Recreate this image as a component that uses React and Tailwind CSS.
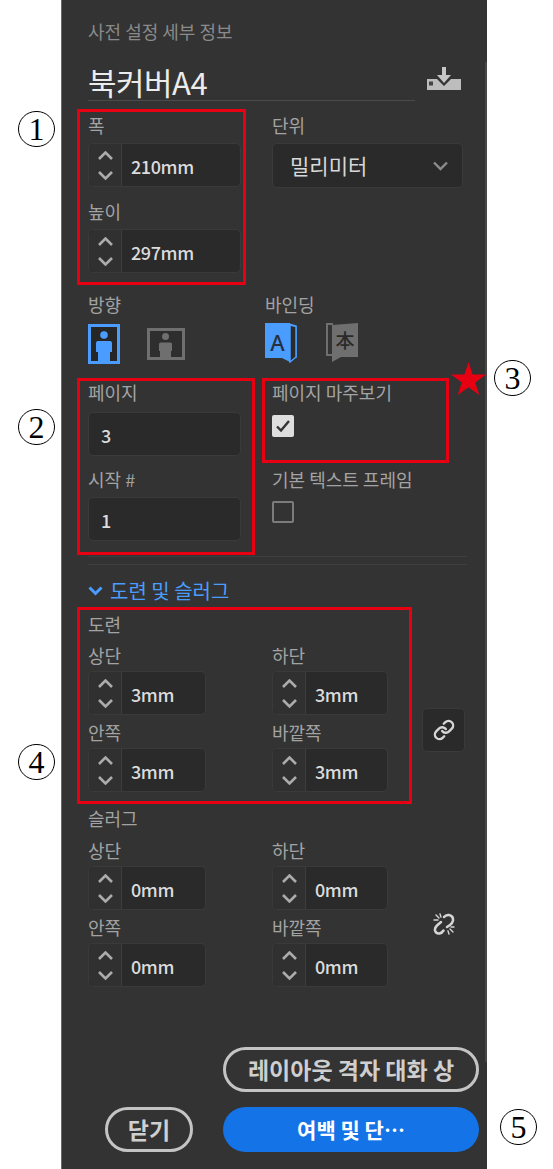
import React from 'react';
import { Link } from 'lucide-react';

const Label = ({ children, className = '' }) => (
    <div className={`h-5 pb-[2px] flex items-center text-[18px] leading-5 text-[#a3a3a3] whitespace-nowrap ${className}`}>{children}</div>
);

const Arrow = ({ down }) => (
    <svg width="15" height="9" viewBox="0 0 15 9" fill="none" stroke="#ababab" strokeWidth="2.6">
        <polyline points={down ? '1,1 7.5,7.5 14,1' : '1,8 7.5,1.5 14,8'} />
    </svg>
);

const Spinner = ({ value, className = '' }) => (
    <div className={`flex h-11 rounded-[5px] border border-[#3a3a3a] bg-[#2a2a2a] ${className}`}>
        <div className="w-[33px] shrink-0 flex flex-col items-center justify-center gap-[11px] border-r border-[#3d3d3d] bg-[#303030] rounded-l-[5px]">
            <Arrow />
            <Arrow down />
        </div>
        <div className="pl-[9px] pt-[2px] flex items-center text-[18px] font-medium tracking-[-0.4px] text-[#dcdcdc]">{value}</div>
    </div>
);

const TextInput = ({ value }) => (
    <div className="h-11 rounded-[5px] border border-[#3a3a3a] bg-[#2a2a2a] pl-3 pt-[2px] flex items-center text-[18px] font-medium text-[#dcdcdc]">{value}</div>
);

const Field = ({ label, value, className = '', gap = 'mt-[5px]' }) => (
    <div className={className}>
        <Label>{label}</Label>
        <Spinner value={value} className={gap} />
    </div>
);

const MarginGrid = ({ values }) => (
    <div className="grid grid-cols-[118px_116px] gap-x-[66px] gap-y-[8px] w-[300px]">
        <Field label="상단" value={values} />
        <Field label="하단" value={values} />
        <Field label="안쪽" value={values} />
        <Field label="바깥쪽" value={values} />
    </div>
);

const DownloadIcon = () => (
    <svg width="34" height="23" viewBox="0 0 34 23" className="mb-[11px]">
        <path d="M0 12h10l7 7 7-7h10v11H0z" fill="#bdbdbd" />
        <path d="M15 0h4v8h5l-7 8-7-8h5z" fill="#c6c6c6" />
        <rect x="2" y="14.500" width="4" height="4" fill="#444444" />
    </svg>
);

const UnlinkIcon = () => (
    <svg width="22" height="22" viewBox="0 0 22 22" fill="none" stroke="#d6d6d6" strokeLinecap="round">
        <g strokeWidth="2.500">
            <path d="M11 4Q13 1.500 16 2Q20.500 3 20 7.500Q19.500 10 17 12L14 14" />
            <path d="M8 9L4 12.500Q1.500 15 2 17.500Q3 21 6.500 20.500Q9 20 10.500 17.500" />
        </g>
        <g strokeWidth="1.400">
            <path d="M3 2l3 3M1 7h4M7 1l1 3" />
            <path d="M17 16l3 3M15 18l1 3M18 14h3" />
        </g>
    </svg>
);

const PortraitIcon = () => (
    <svg width="32" height="40" viewBox="0 0 32 40">
        <rect x="1.500" y="1.500" width="29" height="37" fill="#262626" stroke="#4a9dff" strokeWidth="3" />
        <circle cx="16" cy="11" r="3.800" fill="#4a9dff" />
        <path d="M8 19q0-2 2-2h12q2 0 2 2v9h-2v9H10v-9H8z" fill="#4a9dff" />
    </svg>
);

const LandscapeIcon = () => (
    <svg width="38" height="32" viewBox="0 0 38 32">
        <rect x="1.500" y="1.500" width="35" height="29" fill="#2e2e2e" stroke="#6f6f6f" strokeWidth="3" />
        <circle cx="18.500" cy="8.500" r="3.500" fill="#6f6f6f" />
        <path d="M12 16q0-1.500 1.500-1.500h10q1.500 0 1.500 1.500v7h-1v7H13v-7h-1z" fill="#6f6f6f" />
    </svg>
);

const BindLeftIcon = () => (
    <svg width="32" height="40" viewBox="0 0 32 40">
        <path d="M1 1h23l7 2v31h-2" fill="none" stroke="#4a9dff" strokeWidth="1.500" />
        <path d="M0 0h25v39l-8-4H0z" fill="#4a9dff" />
        <path d="M25 2l6 1.500V34l-6 5z" fill="#2b2b2b" stroke="#4a9dff" strokeWidth="1.500" />
        <text x="12.500" y="28" textAnchor="middle" fontSize="22" fontWeight="500" fill="#26303c" fontFamily="Noto Sans">A</text>
    </svg>
);

const BindRightIcon = () => (
    <svg width="32" height="40" viewBox="0 0 32 40">
        <path d="M7 1H1v31h5" fill="none" stroke="#6f6f6f" strokeWidth="2" />
        <path d="M6 2l26-2v34H15l-9 5z" fill="#6f6f6f" />
        <text x="19" y="25" textAnchor="middle" fontSize="19" fill="#2a2a2a" fontWeight="500" fontFamily="Noto Sans CJK KR">本</text>
    </svg>
);

const Num = ({ n, className }) => (
    <div className={`absolute w-[37px] h-[36px] rounded-full border-[1.5px] border-black bg-white flex items-center justify-center font-['Liberation_Serif',serif] text-[32px] leading-none text-black ${className}`}>{n}</div>
);

const App = () => {
    return (
        <div className="relative w-[553px] h-[1169px] bg-white overflow-hidden font-['Noto_Sans_CJK_KR','Noto_Sans',sans-serif]">
            <div className="relative ml-[61px] w-[426px] h-[1169px] bg-[#333333] border-l border-[#6a6a6a] pl-[26px] pt-[22px]">
                <div className="absolute right-0 top-[62px] w-[2px] h-[1000px] bg-[#484848]" />
                <div className="h-5 pb-[2px] flex items-center text-[18px] text-[#8a8a8a] whitespace-nowrap">사전 설정 세부 정보</div>

                <div className="mt-5 flex items-end">
                    <div className="w-[327px] h-[39px] border-b border-[#4a4a4a] flex items-center text-[31px] leading-none text-[#ececec] tracking-[-0.5px]">북커버A4</div>
                    <div className="ml-[12px]"><DownloadIcon /></div>
                </div>

                <div className="mt-[15px] grid grid-cols-[153px_191px] gap-x-[31px]">
                    <div>
                        <Field label="폭" value="210mm" gap="mt-[7px]" />
                        <Field label="높이" value="297mm" gap="mt-[7px]" className="mt-[15px]" />
                    </div>
                    <div>
                        <Label>단위</Label>
                        <div className="mt-[7px] h-[45px] rounded-[5px] border border-[#3a3a3a] bg-[#2a2a2a] pl-[17px] pr-[14px] flex items-center justify-between text-[21px] text-[#d8d8d8]">
                            밀리미터
                            <svg width="15" height="10" viewBox="0 0 15 10" fill="none" stroke="#8c8c8c" strokeWidth="2.400">
                                <polyline points="1,1.500 7.500,8 14,1.500" />
                            </svg>
                        </div>
                    </div>
                </div>

                <div className="mt-[22px] flex">
                    <div className="w-[177px]">
                        <Label>방향</Label>
                        <div className="mt-[9px] h-10 flex items-center gap-[27px]">
                            <PortraitIcon />
                            <LandscapeIcon />
                        </div>
                    </div>
                    <div>
                        <Label>바인딩</Label>
                        <div className="mt-[8px] h-10 flex items-center gap-[29px]">
                            <BindLeftIcon />
                            <BindRightIcon />
                        </div>
                    </div>
                </div>

                <div className="mt-[19px] grid grid-cols-[153px_191px] gap-x-[31px]">
                    <div>
                        <Label>페이지</Label>
                        <div className="mt-[9px]"><TextInput value="3" /></div>
                        <Label className="mt-[14px]">시작 #</Label>
                        <div className="mt-[7px]"><TextInput value="1" /></div>
                    </div>
                    <div>
                        <Label>페이지 마주보기</Label>
                        <div className="mt-[12px] w-[22px] h-[22px] rounded-[2px] bg-[#dedede] flex items-center justify-center">
                            <svg width="16" height="14" viewBox="0 0 16 14" fill="none" stroke="#333333" strokeWidth="2.400">
                                <polyline points="2,7.500 6,11.500 14,2" />
                            </svg>
                        </div>
                        <Label className="mt-[33px]">기본 텍스트 프레임</Label>
                        <div className="mt-[11px] w-[22px] h-[22px] rounded-[2px] border-2 border-[#7c7c7c]" />
                    </div>
                </div>

                <div className="mt-[15px] w-[379px] h-[9px] border-y border-[#3e3e3e]" />

                <div className="mt-[17px] h-5 pb-[2px] flex items-center gap-[7px] text-[20px] text-[#4a9dff]">
                    <svg width="15" height="10" viewBox="0 0 15 10" fill="none" stroke="#4a9dff" strokeWidth="3">
                        <polyline points="1.500,1.500 7.500,7.500 13.500,1.500" />
                    </svg>
                    도련 및 슬러그
                </div>

                <Label className="mt-[13px]">도련</Label>
                <div className="mt-[11px] flex">
                    <MarginGrid values="3mm" />
                    <div className="ml-[34px] mt-[62px] w-[43px] h-[44px] rounded-[5px] border border-[#3a3a3a] bg-[#2a2a2a] flex items-center justify-center">
                        <Link size={22} strokeWidth={2.600} color="#d6d6d6" />
                    </div>
                </div>

                <Label className="mt-[17px]">슬러그</Label>
                <div className="mt-[12px] flex">
                    <MarginGrid values="0mm" />
                    <div className="ml-[45px] mt-[72px]">
                        <UnlinkIcon />
                    </div>
                </div>

                <div className="mt-[60px] ml-[135px] w-[256px] h-[45px] rounded-full border-[3px] border-[#c4c4c4] flex items-center justify-center text-[23px] font-bold text-[#cfcfcf] whitespace-nowrap">
                    레이아웃 격자 대화 상
                </div>
                <div className="mt-[15px] ml-[17px] flex gap-[30px]">
                    <div className="w-[88px] h-[45px] rounded-full border-[3px] border-[#c4c4c4] flex items-center justify-center text-[23px] font-bold text-[#cfcfcf]">닫기</div>
                    <div className="w-[256px] h-[45px] rounded-full bg-[#1473e6] flex items-center justify-center text-[21px] font-bold text-white">여백 및 단…</div>
                </div>
            </div>

            <div className="absolute left-[77px] top-[109px] w-[169px] h-[176px] border-[3px] border-[#e60012]" />
            <div className="absolute left-[77px] top-[378px] w-[178px] h-[177px] border-[3px] border-[#e60012]" />
            <div className="absolute left-[262px] top-[378px] w-[187px] h-[85px] border-[3px] border-[#e60012]" />
            <div className="absolute left-[77px] top-[607px] w-[335px] h-[197px] border-[3px] border-[#e60012]" />

            <svg className="absolute left-[451px] top-[362px]" width="35" height="33" viewBox="0 0 35 33">
                <polygon points="17.500,0 21.600,12.600 35,12.600 24.200,20.400 28.300,33 17.500,25.200 6.700,33 10.800,20.400 0,12.600 13.400,12.600" fill="#e60012" />
            </svg>

            <Num n="1" className="left-[18px] top-[111px]" />
            <Num n="2" className="left-[18px] top-[409px]" />
            <Num n="3" className="left-[494px] top-[360px]" />
            <Num n="4" className="left-[18px] top-[744px]" />
            <Num n="5" className="left-[500px] top-[1109px]" />
        </div>
    );
};

export default App;
